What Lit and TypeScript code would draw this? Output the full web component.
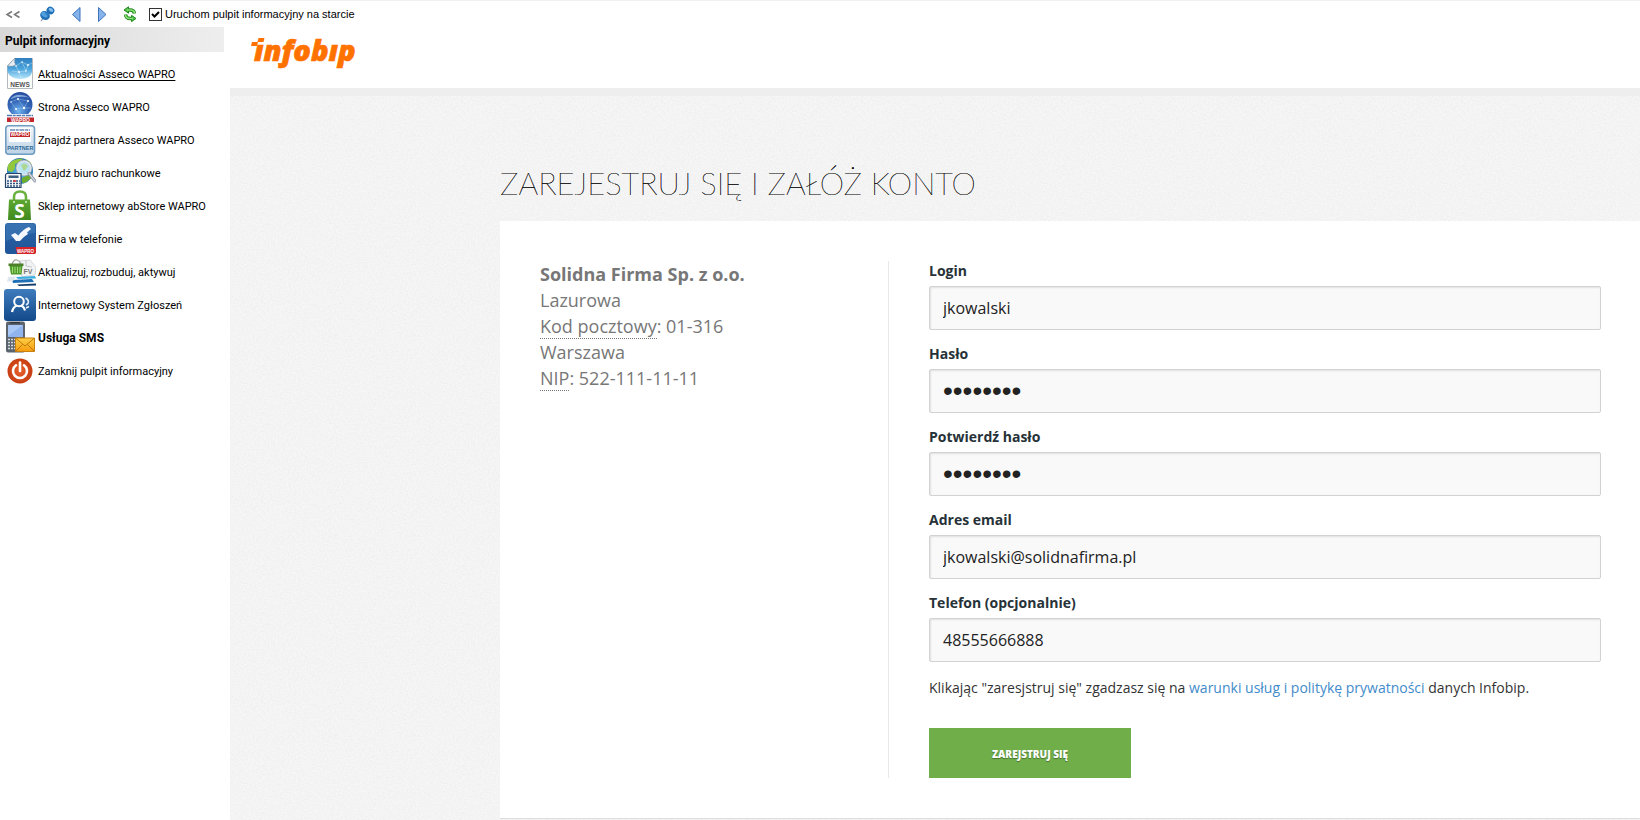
import { LitElement, html, css, svg } from "lit";
import { customElement, state } from "lit/decorators.js";
import { classMap } from "lit/directives/class-map.js";

const gradients = svg`
  <linearGradient id="sky" x1="0" y1="0" x2="0" y2="1"><stop offset="0" stop-color="#2f7fc0"/><stop offset=".5" stop-color="#4aa3dc"/><stop offset="1" stop-color="#b9e6fa"/></linearGradient>
  <radialGradient id="ball" cx=".45" cy=".75" r=".8"><stop offset="0" stop-color="#6fb2f0"/><stop offset=".5" stop-color="#3568b8"/><stop offset="1" stop-color="#24479a"/></radialGradient>
  <linearGradient id="frame" x1="0" y1="0" x2="0" y2="1"><stop offset="0" stop-color="#f4f7fa"/><stop offset="1" stop-color="#bcd3e6"/></linearGradient>
  <radialGradient id="earth" cx=".5" cy=".6" r=".7"><stop offset="0" stop-color="#5cc0ee"/><stop offset="1" stop-color="#1463a8"/></radialGradient>
  <linearGradient id="bag" x1="0" y1="0" x2="0" y2="1"><stop offset="0" stop-color="#5da832"/><stop offset="1" stop-color="#3f8a1c"/></linearGradient>
  <linearGradient id="tile" x1="0" y1="0" x2="0" y2="1"><stop offset="0" stop-color="#2a64a6"/><stop offset="1" stop-color="#1f5599"/></linearGradient>
  <linearGradient id="tile2" x1="0" y1="0" x2="0" y2="1"><stop offset="0" stop-color="#3f7cbd"/><stop offset="1" stop-color="#12498a"/></linearGradient>
  <linearGradient id="mail" x1="0" y1="0" x2="0" y2="1"><stop offset="0" stop-color="#ffcf45"/><stop offset="1" stop-color="#f59d0e"/></linearGradient>
  <radialGradient id="power"><stop offset="0" stop-color="#e8622c"/><stop offset="1" stop-color="#c63d12"/></radialGradient>
`;

const icons = {
  news: svg`
    <path d="M11 1.500H28.500V31.500H3.500V9z" fill="#fff" stroke="#b5b9bd"/>
    <path d="M11 1H28V15Q27 22 16 22 6 21.500 3.500 15V9z" fill="url(#sky)"/>
    <path d="M3.500 9Q9 10 11.500 8 10 5 11 1z" fill="#e9eef3" stroke="#7a8a99" stroke-width=".6"/>
    <path d="M12 9L18 5 24 8 22 14 15 15z M18 5L22 14 M15 15L8 14 M24 8L28 6 M15 15L17 21" fill="none" stroke="#d5effb" stroke-width=".4"/>
    <g fill="#fff"><circle cx="12" cy="9" r=".8"/><circle cx="18" cy="5" r=".8"/><circle cx="24" cy="8" r=".9"/><circle cx="22" cy="14" r=".8"/><circle cx="15" cy="15" r="1"/></g>
    <text x="16" y="30" class="tiny" font-size="6.500" fill="#555">NEWS</text>`,
  globe: svg`
    <circle cx="16" cy="14.500" r="12.500" fill="url(#ball)"/>
    <path d="M6 9Q14 1 26 8 17 5 6 9z" fill="#a9c9ef" opacity=".7"/>
    <path d="M7 12L14 9 24 11 20 18 12 19z M14 9L20 18 M12 19L17 25 M20 18L27 18" fill="none" stroke="#a8d2f7" stroke-width=".4"/>
    <g fill="#fff"><circle cx="7" cy="12" r=".8"/><circle cx="14" cy="9" r="1"/><circle cx="24" cy="11" r="1"/><circle cx="20" cy="18" r="1.200"/><circle cx="12" cy="19" r="1"/></g>
    <path d="M1 24H31V27H1z" fill="#fff"/>
    <path d="M3 25.500H29" stroke="#4f79b3" stroke-width="1.400" stroke-dasharray="5 .7 3 .7"/>
    <path d="M3 27.500H30V32H3z" fill="#c0262c"/>
    <text x="16.500" y="31.600" class="tiny" font-size="5" fill="#fff">WAPRO</text>`,
  partner: svg`
    <rect x="1.800" y="2.800" width="28.700" height="28.400" rx="3" fill="url(#frame)" stroke="#6f9cc2" stroke-width="1.600"/>
    <rect x="5" y="5" width="22" height="14" rx="1" fill="#fff"/>
    <path d="M6 7H26" stroke="#6a86b8" stroke-width="1.400" stroke-dasharray="5 .7 3 .7"/>
    <path d="M6 9H26V14H6z" fill="#c0262c"/>
    <text x="16" y="13.300" class="tiny" font-size="5" fill="#fff">WAPRO</text>
    <text x="16.300" y="26.500" class="tiny" font-size="5.500" fill="#2f6797">PARTNER</text>`,
  office: svg`
    <circle cx="16" cy="15" r="13" fill="url(#earth)"/>
    <path d="M4 9Q9 2 19 2.500 16 7 11 8 12 13 8 16L4 15Q3 12 4 9z" fill="#93c83d"/>
    <path d="M18 22Q26 18 28.500 19 26 25 19 27.500 17 25 18 22z" fill="#6fae2c"/>
    <path d="M22 3Q26 5 28 9L24 7z" fill="#93c83d"/>
    <circle cx="20" cy="12" r="7" fill="#cfeefb" fill-opacity=".85" stroke="#dde3e8" stroke-width="2.200"/>
    <circle cx="20" cy="12" r="8" fill="none" stroke="#8795a2" stroke-width=".6"/>
    <path d="M17 9Q21 6 24 10 21 16 19 14z" fill="#a8d36a" opacity=".7"/>
    <path d="M25 17.500L31 25" stroke="#8f9aa5" stroke-width="3" stroke-linecap="round"/>
    <path d="M25 17.500L31 25" stroke="#e0e5ea" stroke-width="1.200" stroke-linecap="round"/>
    <path d="M2.500 17.500H17V31.500H1.500V19z" fill="#f4f6f8" stroke="#25466b" stroke-width="1.200"/>
    <path d="M4.500 19.500H14.500V22H4.500z" fill="#3f5f80"/>
    <path d="M3 25H16M3 27.500H16M3 30H16" stroke="#2f5480" stroke-width="1.600" stroke-dasharray="2 1"/>
    <path d="M9 25H12" stroke="#d33" stroke-width="1.600"/>`,
  store: svg`
    <path d="M10 12V8Q10 2.500 16 2.500T22 8V12" fill="none" stroke="#6bb13f" stroke-width="2.600"/>
    <path d="M5 10.500H26L27 31H4z" fill="url(#bag)"/>
    <circle cx="10" cy="13" r="1" fill="#d8eec9"/><circle cx="22" cy="13" r="1" fill="#d8eec9"/>
    <text x="15.500" y="28.500" class="letter" font-size="19" fill="#fff">S</text>`,
  phone: svg`
    <rect x="1" y="1" width="31" height="31" rx="3" fill="url(#tile)"/>
    <path d="M2 3Q2 2 4 1.500H29Q31 2 31 3V11Q18 12 2 19z" fill="#4c86c2" opacity=".45"/>
    <path d="M7 13L11 11 14.500 13.500Q19 7 25 5L27 7 23 10.500 24 12Q19 15 16 19H12z" fill="#f5f9fd"/>
    <path d="M11.500 25H32V30Q32 32 30 32H13z" fill="#d5232a"/>
    <text x="21.500" y="30.500" class="tiny" font-size="4.500" fill="#fff">WAPRO</text>`,
  upgrade: svg`
    <path d="M15 6L26 5 32 12 31 20 18 22z" fill="#f1f2f3" stroke="#c6c9cc" stroke-width=".7"/>
    <path d="M22 5.500V11L28 12" fill="none" stroke="#b5b8bb" stroke-width=".8"/>
    <text x="24" y="19" class="tiny" font-size="7" fill="#777">FV</text>
    <path d="M8 9Q10 4 13 5T17 9" fill="none" stroke="#9aa39a" stroke-width="1.100"/>
    <path d="M4.500 8.500H19.500V11H4.500z" fill="#4e7f2b"/>
    <path d="M5.500 11H18.500L17.500 19.500H7z" fill="#4f9b2c"/>
    <path d="M8.500 12V18M11 12V18M13.500 12V18M16 12V18" stroke="#a4dd76" stroke-width="1"/>
    <path d="M12 22L31 21 32 23.500 14 24z" fill="#3eaee0"/>
    <path d="M8 25L28 24 30 27 9 28z" fill="#1e6fb5"/>
    <path d="M13 29.500L32 28.500V30.500L15 31z" fill="#163e6b"/>
    <path d="M4 22L12 21.500 9 26 3 27z" fill="#dfe7ee"/>`,
  tickets: svg`
    <rect x="0" y="1" width="32" height="32" rx="3" fill="url(#tile2)"/>
    <circle cx="15" cy="13.500" r="4.800" fill="none" stroke="#fff" stroke-width="2"/>
    <path d="M8 24Q9 19 13 17.500" fill="none" stroke="#fff" stroke-width="2.300"/>
    <path d="M17 17.500Q20 18.500 21 22.500" fill="none" stroke="#fff" stroke-width="2"/>
    <path d="M21.500 10Q25.500 12 24 15.500L22 17M25 18.500L22 20" fill="none" stroke="#e4eef8" stroke-width="1.600"/>`,
  sms: svg`
    <rect x="2" y="0.500" width="19" height="31" rx="2" fill="#5b646d"/>
    <path d="M6 1.800H16" stroke="#2b3036" stroke-width="1.200"/>
    <path d="M4 4H19V16H4z" fill="#8fb4ee"/><path d="M4 4H19L4 15z" fill="#a9c8f5"/>
    <path d="M4 18.500H12M4 21.500H12M4 24.500H12M4 27.500H12" stroke="#d5dbe0" stroke-width="1.500" stroke-dasharray="2 1"/>
    <path d="M11.500 17H30.500V30.500H11.500z" fill="url(#mail)" stroke="#c9800f"/>
    <path d="M12 17.500L21 25 30 17.500M12 30L18.500 23.500M30 30L23.500 23.500" fill="none" stroke="#b86f08" stroke-width=".9"/>`,
  power: svg`
    <circle cx="16" cy="17" r="12.500" fill="url(#power)"/>
    <path d="M12 11.300A7 7 0 1 0 20 11.300" fill="none" stroke="#fff" stroke-width="2.600" stroke-linecap="round"/>
    <path d="M16 8.500V17" stroke="#fff" stroke-width="2.600" stroke-linecap="round"/>`,
};

const links: { icon: keyof typeof icons; label: string }[] = [
  { icon: "news", label: "Aktualności Asseco WAPRO" },
  { icon: "globe", label: "Strona Asseco WAPRO" },
  { icon: "partner", label: "Znajdź partnera Asseco WAPRO" },
  { icon: "office", label: "Znajdź biuro rachunkowe" },
  { icon: "store", label: "Sklep internetowy abStore WAPRO" },
  { icon: "phone", label: "Firma w telefonie" },
  { icon: "upgrade", label: "Aktualizuj, rozbuduj, aktywuj" },
  { icon: "tickets", label: "Internetowy System Zgłoszeń" },
  { icon: "sms", label: "Usługa SMS" },
  { icon: "power", label: "Zamknij pulpit informacyjny" },
];

const fields = [
  { id: "login", label: "Login", type: "text", value: "jkowalski" },
  { id: "password", label: "Hasło", type: "password", value: "haslo123" },
  { id: "confirm", label: "Potwierdź hasło", type: "password", value: "haslo123" },
  { id: "email", label: "Adres email", type: "email", value: "jkowalski@solidnafirma.pl" },
  { id: "phone", label: "Telefon (opcjonalnie)", type: "tel", value: "48555666888" },
];

@customElement("dashboard-toolbar")
export class DashboardToolbar extends LitElement {
  static styles = css`
    :host { display: flex; align-items: center; height: 27px; box-sizing: border-box; border-top: 1px solid #f0f0f0; background: #fff; padding-left: 5px; font: 11px "Liberation Sans", Arial, sans-serif; color: #000; }
    .tool { display: block; border: 0; background: none; padding: 0; width: 16px; height: 16px; }
    .tool svg { display: block; }
    .pin { margin-left: 18px; }
    .back { margin-left: 13px; }
    .next { margin-left: 10px; }
    .refresh { margin-left: 12px; }
    .start { display: flex; align-items: center; gap: 3px; margin-left: 11px; white-space: nowrap; }
    .box { appearance: none; width: 13px; height: 13px; margin: 0; border: 1px solid #333; background: #fff; }
    .box:checked { background: #fff url("data:image/svg+xml,%3Csvg xmlns='http://www.w3.org/2000/svg' viewBox='0 0 11 11'%3E%3Cpath d='M2 5L4.500 7.500 9 3' fill='none' stroke='%23000' stroke-width='2'/%3E%3C/svg%3E") center / 11px 11px; }
  `;
  render() {
    return html`
      <button class="tool" aria-label="Zwiń"><svg width="16" height="16" viewBox="0 0 16 16" fill="none" stroke="#777" stroke-width="1.500"><path d="M7 5.500L2 8.500 7 11.500M14.500 5.500L9.500 8.500 14.500 11.500"/></svg></button>
      <button class="tool pin" aria-label="Przypnij"><svg width="16" height="16" viewBox="0 0 16 16">
        <path d="M5 11L2 15" stroke="#9aa5b0" stroke-width="1.300"/>
        <ellipse cx="6" cy="9.500" rx="5" ry="4.300" transform="rotate(35 6 9.500)" fill="#1f6db5"/>
        <ellipse cx="5.500" cy="8.600" rx="3.600" ry="2.400" transform="rotate(35 5.500 8.600)" fill="#4f9fdd"/>
        <path d="M6 7L9.500 4 12 7 8.500 10z" fill="#2a7bc4"/>
        <ellipse cx="11.500" cy="4.500" rx="4" ry="3.600" transform="rotate(35 11.500 4.500)" fill="#1f6db5"/>
        <ellipse cx="12" cy="3.800" rx="2.600" ry="1.700" transform="rotate(35 12 3.800)" fill="#7fbdec"/></svg></button>
      <button class="tool back" aria-label="Wstecz"><svg width="16" height="16" viewBox="0 0 16 16"><path d="M12 1.500V15.500L4.500 8.500z" fill="#85b3ea" stroke="#3b73bd"/></svg></button>
      <button class="tool next" aria-label="Dalej"><svg width="16" height="16" viewBox="0 0 16 16"><path d="M4.500 1.500V15.500L12 8.500z" fill="#85b3ea" stroke="#3b73bd"/></svg></button>
      <button class="tool refresh" aria-label="Odśwież"><svg width="16" height="16" viewBox="0 0 16 16" fill="none">
        <g stroke="#258a24" stroke-width="3.400"><path d="M12.500 7.500Q12 4 8 4H6M3.500 8.500Q4 12.500 8 12.500H10"/></g>
        <path d="M6.500 .8V7.200L2 4zM9.500 9.300V15.700L14 12.500z" fill="#4fbe45" stroke="#258a24"/>
        <g stroke="#8be274" stroke-width="1.700"><path d="M12.500 7Q12 4 8 4H5M3.500 9Q4 12.500 8 12.500H11"/></g></svg></button>
      <label class="start"><input class="box" type="checkbox" checked />Uruchom pulpit informacyjny na starcie</label>
    `;
  }
}

@customElement("dashboard-nav")
export class DashboardNav extends LitElement {
  @state() private current = 8;
  static styles = css`
    :host { display: block; font: 11px/15px Roboto, "Liberation Sans", sans-serif; color: #000; }
    .heading { margin: 0; padding: 3px 5px 0; font-size: 12px; line-height: 22px; font-weight: bold; background: linear-gradient(90deg, #d8d8d8, #eee); }
    .list { list-style: none; margin: 0; padding: 5px 0 0 4px; }
    .link { display: flex; align-items: center; gap: 2px; height: 33px; color: inherit; text-decoration: none; white-space: nowrap; }
    .icon { display: block; flex: none; }
    .text { padding-top: 2px; }
    .underlined { text-decoration: underline; text-underline-offset: 2px; }
    .current { font-weight: bold; font-size: 12px; }
    .tiny { font-family: "Liberation Sans", Arial, sans-serif; font-weight: bold; text-anchor: middle; }
    .letter { font-family: "Open Sans", sans-serif; font-weight: bold; text-anchor: middle; }
  `;
  render() {
    return html`
      <h2 class="heading">Pulpit informacyjny</h2>
      <ul class="list">
        ${links.map((l, i) => html`<li>
          <a href="#" class=${classMap({ link: true, underlined: i === 0, current: i === this.current })} @click=${(e: Event) => { e.preventDefault(); this.current = i; }}>
            <svg class="icon" width="32" height="33" viewBox="0 0 32 33" aria-hidden="true"><defs>${gradients}</defs>${icons[l.icon]}</svg>
            <span class="text">${l.label}</span>
          </a></li>`)}
      </ul>
    `;
  }
}

@customElement("register-form")
export class RegisterForm extends LitElement {
  static styles = css`
    :host { display: block; font: 14px/20px "Open Sans", sans-serif; color: #333; }
    .field { display: block; margin-bottom: 14px; }
    .label { display: block; margin-bottom: 5px; font-weight: bold; color: #263238; }
    .input { display: block; box-sizing: border-box; width: 100%; height: 44px; padding: 0 13px; border: 1px solid #d2d2d2; border-radius: 2px; background: #f9f9f9; box-shadow: inset 1px 1px 2px rgba(0, 0, 0, 0.1); font: 16px "Open Sans", sans-serif; color: #222; }
    .masked { font: 28px "Liberation Sans", Arial, sans-serif; }
    .terms { margin: 16px 0 30px; }
    .link { color: #428bca; text-decoration: none; }
    .submit { display: block; height: 50px; padding: 2px 63px 0; border: 0; background: #6fae49; color: #fff; font: 800 10px "Open Sans", sans-serif; text-transform: uppercase; text-shadow: 0 1px 1px rgba(0, 0, 0, 0.35); }
  `;
  render() {
    return html`<form @submit=${(e: Event) => e.preventDefault()}>
      ${fields.map((f) => html`<div class="field">
        <label class="label" for=${f.id}>${f.label}</label>
        <input class=${classMap({ input: true, masked: f.type === "password" })} id=${f.id} type=${f.type} .value=${f.value} autocomplete="off" />
      </div>`)}
      <p class="terms">Klikając "zaresjstruj się" zgadzasz się na <a class="link" href="#">warunki usług i politykę prywatności</a> danych Infobip.</p>
      <button class="submit">Zarejstruj się</button>
    </form>`;
  }
}

@customElement("app-root")
export class AppRoot extends LitElement {
  static styles = css`
    :host { display: flex; flex-direction: column; min-height: 100vh; background: #fff; }
    .body { flex: 1; display: grid; grid-template-columns: 224px minmax(0, 1fr); column-gap: 6px; }
    .main { display: flex; flex-direction: column; font-family: "Open Sans", sans-serif; }
    .top { height: 61px; border-bottom: 8px solid #eee; padding-left: 20px; }
    .logo { display: block; }
    .brand { font: italic 800 29px "Open Sans", sans-serif; fill: #ff7200; stroke: #ff7200; stroke-width: 0.7; }
    .content { flex: 1; padding: 67px 0 2px 270px; background: #f6f6f6 url("data:image/svg+xml,%3Csvg xmlns='http://www.w3.org/2000/svg' width='200' height='200'%3E%3Cfilter id='n'%3E%3CfeTurbulence type='fractalNoise' baseFrequency='.6' numOctaves='2' stitchTiles='stitch'/%3E%3CfeColorMatrix values='0 0 0 0 0 0 0 0 0 0 0 0 0 0 0 .06 0 0 0 -.02'/%3E%3C/filter%3E%3Crect width='200' height='200' filter='url(%23n)'/%3E%3C/svg%3E"); }
    .title { margin: 0 0 18px; font: 100 31px/40px Lato, sans-serif; color: #111; text-shadow: 0 0 #111, 0 0 #111; text-transform: uppercase; }
    .card { display: grid; grid-template-columns: 348px minmax(0, 1fr); padding: 40px 39px 40px 40px; background: #fff; border-bottom: 1px solid #ddd; }
    .company { margin: 0; font-style: normal; font-size: 18px; line-height: 26px; color: #777; }
    .term { text-decoration: none; border-bottom: 1px dotted #777; }
    .form { border-left: 1px solid #e8e8e8; padding-left: 40px; }
  `;
  render() {
    return html`
      <dashboard-toolbar></dashboard-toolbar>
      <div class="body">
        <aside><dashboard-nav></dashboard-nav></aside>
        <main class="main">
          <header class="top">
            <svg class="logo" width="110" height="44" viewBox="0 0 110 44" role="img" aria-label="infobip">
              <text class="brand" x="4" y="34">ınfobıp</text>
              <path d="M2 15H8L7 19H1zM8.500 11H14.500L13.500 15H7.500z" fill="#ff7200"/>
            </svg>
          </header>
          <section class="content">
            <h1 class="title">Zarejestruj się i załóż konto</h1>
            <div class="card">
              <address class="company">
                <strong>Solidna Firma Sp. z o.o.</strong><br />Lazurowa<br />
                <abbr class="term">Kod pocztowy</abbr>: 01-316<br />Warszawa<br />
                <abbr class="term">NIP</abbr>: 522-111-11-11
              </address>
              <div class="form"><register-form></register-form></div>
            </div>
          </section>
        </main>
      </div>
    `;
  }
}
